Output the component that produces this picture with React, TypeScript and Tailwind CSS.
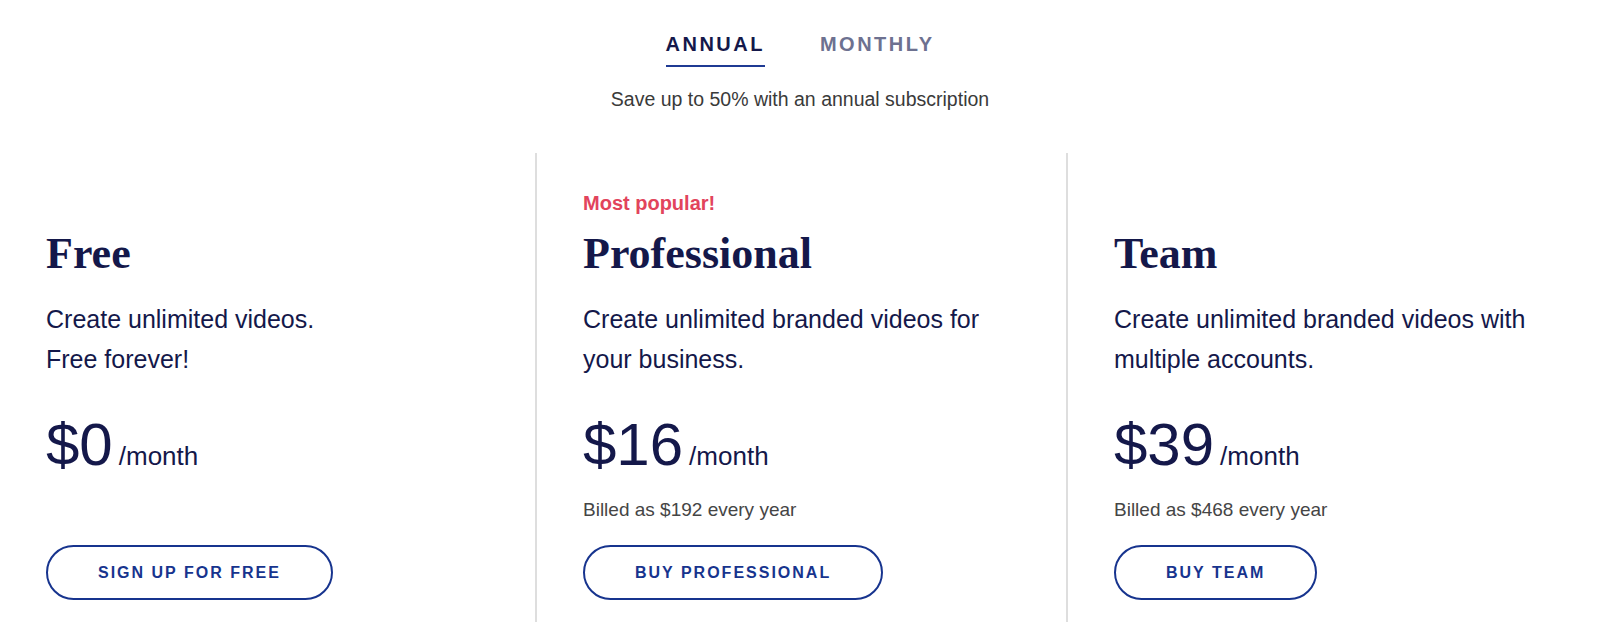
import React from "react";

type Plan = {
  popular: string;
  name: string;
  line1: string;
  line2: string;
  price: string;
  billed: string;
  cta: string;
};

const plans: Plan[] = [
  {
    popular: "",
    name: "Free",
    line1: "Create unlimited videos.",
    line2: "Free forever!",
    price: "$0",
    billed: "",
    cta: "SIGN UP FOR FREE",
  },
  {
    popular: "Most popular!",
    name: "Professional",
    line1: "Create unlimited branded videos for",
    line2: "your business.",
    price: "$16",
    billed: "Billed as $192 every year",
    cta: "BUY PROFESSIONAL",
  },
  {
    popular: "",
    name: "Team",
    line1: "Create unlimited branded videos with",
    line2: "multiple accounts.",
    price: "$39",
    billed: "Billed as $468 every year",
    cta: "BUY TEAM",
  },
];

function PlanColumn({ plan, index }: { plan: Plan; index: number }) {
  return (
    <div
      className={
        index === 0
          ? "pl-[46px] pt-[38px]"
          : "pl-[46px] pt-[38px] border-l-2 border-[#dedede]"
      }
    >
      <div className="h-[24px] text-[20px] leading-[24px] font-bold text-[#e2445c]">
        {plan.popular}
      </div>
      <h2 className="mt-[13px] font-['Liberation_Serif',serif] text-[44px] leading-[52px] font-bold text-[#14184a]">
        {plan.name}
      </h2>
      <p className="mt-[19px] text-[25px] leading-[40px] text-[#14184a]">
        {plan.line1}
        <br />
        {plan.line2}
      </p>
      <div className="mt-[34px] flex items-baseline gap-[6px] text-[#14184a]">
        <span className="text-[60px] leading-[64px]">{plan.price}</span>
        <span className="text-[26px] leading-[30px]">/month</span>
      </div>
      <div className="mt-[21px] h-[24px] text-[19px] leading-[24px] text-[#454545]">
        {plan.billed}
      </div>
      <button className="mt-[23px] h-[55px] px-[50px] rounded-full border-2 border-[#17348e] bg-white text-[16px] leading-[20px] font-bold tracking-[2px] text-[#17348e]">
        {plan.cta}
      </button>
    </div>
  );
}

export default function App() {
  return (
    <div className="h-[622px] w-full overflow-hidden bg-white flex flex-col font-['Liberation_Sans',Arial,sans-serif]">
      <div className="pt-[32px] flex justify-center gap-[55px]">
        <div className="pb-[9px] border-b-2 border-[#1f3a93] text-[20px] leading-[24px] font-bold tracking-[2.5px] text-[#14184a]">
          ANNUAL
        </div>
        <div className="pb-[9px] border-b-2 border-transparent text-[20px] leading-[24px] font-bold tracking-[2.5px] text-[#6d7190]">
          MONTHLY
        </div>
      </div>
      <p className="mt-[20px] text-center text-[19.5px] leading-[24px] text-[#3a3a3a]">
        Save up to 50% with an annual subscription
      </p>
      <div className="mt-[42px] grid grid-cols-[535px_531px_1fr] flex-1">
        {plans.map((p, i) => (
          <PlanColumn key={p.name} plan={p} index={i} />
        ))}
      </div>
    </div>
  );
}
